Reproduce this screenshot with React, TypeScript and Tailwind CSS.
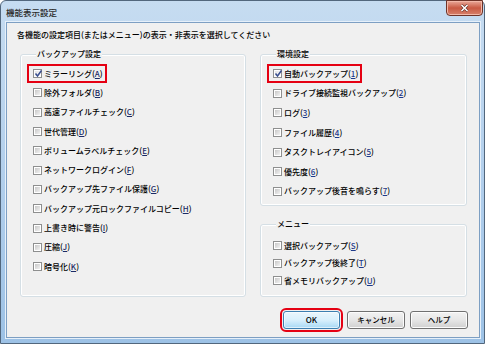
import React from 'react';

type Item = {
  label: string;
  key: string;
  checked?: boolean;
  marked?: boolean;
};

const backupItems: Item[] = [
  { label: 'ミラーリング', key: 'A', checked: true, marked: true },
  { label: '除外フォルダ', key: 'B' },
  { label: '高速ファイルチェック', key: 'C' },
  { label: '世代管理', key: 'D' },
  { label: 'ボリュームラベルチェック', key: 'E' },
  { label: 'ネットワークログイン', key: 'F' },
  { label: 'バックアップ先ファイル保護', key: 'G' },
  { label: 'バックアップ元ロックファイルコピー', key: 'H' },
  { label: '上書き時に警告', key: 'I' },
  { label: '圧縮', key: 'J' },
  { label: '暗号化', key: 'K' },
];

const envItems: Item[] = [
  { label: '自動バックアップ', key: '1', checked: true, marked: true },
  { label: 'ドライブ接続監視バックアップ', key: '2' },
  { label: 'ログ', key: '3' },
  { label: 'ファイル履歴', key: '4' },
  { label: 'タスクトレイアイコン', key: '5' },
  { label: '優先度', key: '6' },
  { label: 'バックアップ後音を鳴らす', key: '7' },
];

const menuItems: Item[] = [
  { label: '選択バックアップ', key: 'S' },
  { label: 'バックアップ後終了', key: 'T' },
  { label: '省メモリバックアップ', key: 'U' },
];

function CheckBox({ checked }: { checked?: boolean }) {
  return (
    <span className="relative flex h-[9px] w-[9px] shrink-0 border border-[#8e8f8f] bg-white p-[1px]">
      <span
        className={
          checked
            ? 'h-full w-full bg-gradient-to-br from-[#e4e4e4] to-[#fbfbfb]'
            : 'h-full w-full bg-gradient-to-br from-[#c8c8c8] to-[#f2f2f2]'
        }
      />
      {checked && (
        <svg className="absolute left-[0px] top-[-1px] h-[9px] w-[9px]" viewBox="0 0 9 9">
          <path d="M1.5 4.5 L3.5 7 L7.5 1.5" fill="none" stroke="#3a4f8f" strokeWidth={1.5} />
        </svg>
      )}
    </span>
  );
}

function Row({ item, height, keyColor }: { item: Item; height: string; keyColor: string }) {
  return (
    <div className={`flex items-center ${height}`}>
      <span className="relative flex items-center gap-[2px]">
        {/* red annotation frame */}
        {item.marked && (
          <span className="pointer-events-none absolute -bottom-[4px] -left-[6px] -right-[4px] -top-[5px] border-2 border-[#e50012]" />
        )}
        <CheckBox checked={item.checked} />
        <span className="whitespace-nowrap leading-[10px]">
          {item.label}(<span className={`underline underline-offset-[1px] ${keyColor}`}>{item.key}</span>)
        </span>
      </span>
    </div>
  );
}

function Group({ title, className, children }: { title: string; className: string; children: React.ReactNode }) {
  return (
    <fieldset className={`rounded-[3px] border border-[#d5dfe5] shadow-[inset_0_0_0_1px_#ffffff] ${className}`}>
      <legend className="ml-[3px] bg-[#f0f0f0] px-[1px] leading-[12px]">{title}</legend>
      {children}
    </fieldset>
  );
}

function Button({ label, primary }: { label: string; primary?: boolean }) {
  return (
    <button
      className={
        primary
          ? 'h-[18px] w-[57px] rounded-[3px] border border-[#3c7fb1] bg-gradient-to-b from-[#eaf6fd] via-[#d9f0fc] to-[#a7d9f5] text-[8px] leading-none text-black shadow-[inset_0_0_0_1px_#ffffffa0] outline-2 outline-offset-[1px] outline-[#e50012]'
          : 'h-[18px] w-[58px] rounded-[3px] border border-[#707070] bg-gradient-to-b from-[#f2f2f2] via-[#e6e6e6] to-[#d0d0d0] text-[7.5px] leading-none text-black shadow-[inset_0_0_0_1px_#fcfcfc]'
      }
    >
      {label}
    </button>
  );
}

export default function App() {
  return (
    <div className="h-[344px] w-[485px] overflow-hidden bg-white font-['Noto_Sans_CJK_JP','Noto_Sans',sans-serif] text-[8px] font-medium text-black">
      <div className="flex h-full w-full flex-col rounded-t-[6px] border border-[#52677d] bg-gradient-to-b from-[#c6dcf1] via-[#b2cfec] to-[#9dc2e6]">
        {/* Title bar */}
        <div className="flex h-[21px] shrink-0 items-start justify-between">
          <span className="mt-[5px] pl-[5px] text-[8.5px] leading-[12px] text-[#2a2a2a]">機能表示設定</span>
          <div className="-mt-[1px] mr-[1px] flex h-[16px] w-[37px] items-center justify-center rounded-b-[4px] border border-[#6e3328] bg-gradient-to-b from-[#e9a99a] via-[#c95a43] to-[#d6806a] shadow-[inset_0_0_0_1px_#f2b8a8]">
            <svg className="h-[8px] w-[9px]" viewBox="0 0 9 8">
              <path d="M1.5 1 L7.5 7 M7.5 1 L1.5 7" stroke="#5a2a22" strokeWidth={2.6} />
              <path d="M1.5 1 L7.5 7 M7.5 1 L1.5 7" stroke="#ffffff" strokeWidth={1.6} />
            </svg>
          </div>
        </div>

        {/* Client area */}
        <div className="mb-[5px] ml-[5px] mr-[4px] flex flex-1 flex-col border border-[#7d9fc3] bg-[#f0f0f0] shadow-[0_0_0_1px_#e6f0fa]">
          <p className="mt-[6px] pl-[10px] leading-[12px]">各機能の設定項目(またはメニュー)の表示・非表示を選択してください</p>

          <div className="mt-[7px] flex pl-[13px]">
            <Group title="バックアップ設定" className="h-[249px] w-[226px] pl-[12px] pt-[4px]">
              {backupItems.map((item) => (
                <Row key={item.key} item={item} height="h-[19.3px]" keyColor="text-[#1b2b66]" />
              ))}
            </Group>

            <div className="ml-[14px] flex w-[207px] flex-col">
              <Group title="環境設定" className="h-[158px] w-full pl-[12px] pt-[4px]">
                {envItems.map((item) => (
                  <Row key={item.key} item={item} height="h-[19.6px]" keyColor="text-[#1d3a8a]" />
                ))}
              </Group>
              <Group title="メニュー" className="mt-[12px] h-[79px] w-full pl-[12px] pt-[7px]">
                {menuItems.map((item) => (
                  <Row key={item.key} item={item} height="h-[17.5px]" keyColor="text-[#1d3a8a]" />
                ))}
              </Group>
            </div>
          </div>

          <div className="mt-[14px] flex pl-[276px]">
            <Button label="OK" primary />
            <span className="ml-[7px]">
              <Button label="キャンセル" />
            </span>
            <span className="ml-[5px]">
              <Button label="ヘルプ" />
            </span>
          </div>
        </div>
      </div>
    </div>
  );
}
